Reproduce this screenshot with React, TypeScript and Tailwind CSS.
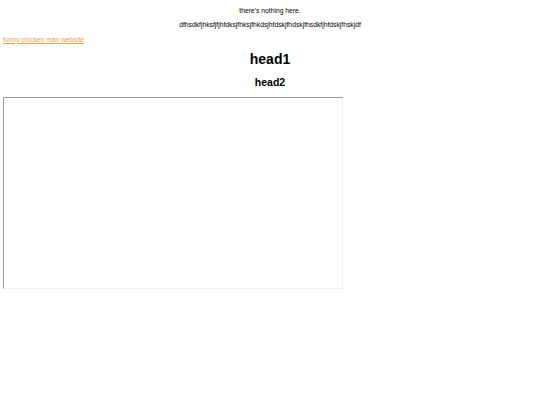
export default function App() {
  return (
    <div className="min-h-screen bg-white px-[3px] font-['Liberation_Sans',Arial,sans-serif] text-[6.75px] leading-[1.15] text-black">
      <p className="my-[6.75px] text-center">there's nothing here.</p>
      <p className="my-[6.75px] text-center">dfhsdkfjhksfjfjhfdksjfhksjfhkdsjhfdskjfhdskjfhsdkfjhfdskjfhskjdf</p>
      <p className="my-[6.75px]">
        <a href="#" className="text-[#f0a050] underline">
          funny chicken man website
        </a>
      </p>
      <h1 className="mt-[7px] mb-[9px] text-center text-[14px] font-bold">head1</h1>
      <h2 className="mt-[8.5px] mb-[9.5px] text-center text-[10.5px] font-bold">head2</h2>
      <div className="h-[192px] w-[340px] border border-t-[#9a9a9a] border-l-[#9a9a9a] border-r-[#f0f0f0] border-b-[#f0f0f0] bg-white" />
    </div>
  )
}
